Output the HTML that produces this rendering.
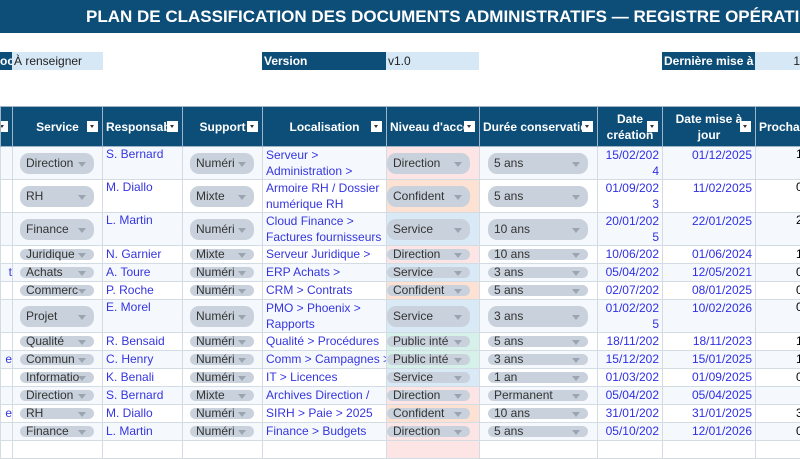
<!DOCTYPE html>
<html><head><meta charset="utf-8"><style>
*{margin:0;padding:0;box-sizing:border-box}
body{width:800px;height:442px;overflow:hidden;background:#fff;font-family:"Liberation Sans",sans-serif;position:relative}
.title{position:absolute;left:0;top:0;width:800px;height:33px;background:#0d4e79;color:#fff;font-weight:bold;font-size:17px;line-height:33px;white-space:nowrap;overflow:hidden}
.title span{position:absolute;left:86px}
.m{position:absolute;top:52px;height:18px;font-size:12px;line-height:18px;white-space:nowrap;overflow:hidden;padding-left:2px}
.d{background:#0d4e79;color:#fff;font-weight:bold}
.l{background:#d6e8f6;color:#222}
table{position:absolute;left:0;top:106px;border-collapse:collapse;table-layout:fixed;width:820px}
td,th{border:1px solid #d3dbe3;overflow:hidden;white-space:nowrap;position:relative;vertical-align:top;font-size:12px;padding:0 3px}
th{background:#0d4e79;color:#fff;font-weight:bold;height:40px;vertical-align:middle;text-align:center;line-height:16px;border-color:#9fb4c6}
th i{position:absolute;right:4px;top:14px;width:11px;height:11px;background:#fff}
th i:after{content:"";position:absolute;left:3px;top:4px;border-left:2.5px solid transparent;border-right:2.5px solid transparent;border-top:3px solid #333}
tr.a td{background:#f5f9fd}
tr.b td{background:#fff}
.bl{color:#3535e0}
.dt{color:#2f2fe6;text-align:right;white-space:normal;word-break:break-all;line-height:16px}
.t td{height:33px}
.s td{height:18px;line-height:16px}
.p{position:absolute;background:#c9d2dc;border-radius:9px;color:#333;font-size:12px;padding-left:6px;overflow:visible;white-space:nowrap}
.t .p{top:6px;height:21px;line-height:21px}
.s .p{top:3px;height:11px;line-height:11px}
.p:after{content:"";position:absolute;right:8px;top:50%;margin-top:-2px;border-left:4px solid transparent;border-right:4px solid transparent;border-top:5px solid #9aa5b1}
.p b{font-weight:normal;display:inline-block;overflow:hidden;vertical-align:top}
.c1 .p{left:7px;right:8px}
.c3 .p{left:7px;right:8px}
.c5 .p{left:0;right:9px}
.c6 .p{left:8px;right:9px}
.nd{background:#fde5e5!important}.nc{background:#fde2d3!important}.ns{background:#d9e9f5!important}.np{background:#d5f1ea!important}
.pr{text-align:left;padding-left:40px}
</style></head><body>
<div class="title"><span>PLAN DE CLASSIFICATION DES DOCUMENTS ADMINISTRATIFS — REGISTRE OPÉRATIONNEL</span></div>
<div class="m d" style="left:0;width:12px;padding-left:0">oc</div>
<div class="m l" style="left:12px;width:91px">À renseigner</div>
<div class="m d" style="left:262px;width:124px">Version</div>
<div class="m l" style="left:386px;width:93px">v1.0</div>
<div class="m d" style="left:662px;width:93px">Dernière mise à j</div>
<div class="m l" style="left:755px;width:45px;text-align:right;padding-right:0">1</div>
<table>
<colgroup><col style="width:12px"><col style="width:90px"><col style="width:80px"><col style="width:80px"><col style="width:124px"><col style="width:93px"><col style="width:118px"><col style="width:65px"><col style="width:93px"><col style="width:65px"></colgroup>
<tr><th><i></i></th><th>Service<i></i></th><th style="text-align:left">Responsab<i></i></th><th>Support<i></i></th><th>Localisation<i></i></th><th style="text-align:left">Niveau d'accè<i></i></th><th style="text-align:left">Durée conservatio<i></i></th><th>Date<br>création<i></i></th><th>Date mise à<br>jour<i></i></th><th style="text-align:left">Prochain</th></tr>
<tr class="t a"><td></td><td class="c1"><div class="p">Direction</div></td><td class="bl">S. Bernard</td><td class="c3"><div class="p">Numéri</div></td><td class="bl" style="white-space:normal;line-height:16px">Serveur &gt; Administration &gt;</td><td class="c5 nd"><div class="p">Direction</div></td><td class="c6"><div class="p">5 ans</div></td><td class="dt">15/02/2024</td><td class="dt">01/12/2025</td><td class="pr">1</td></tr>
<tr class="t b"><td></td><td class="c1"><div class="p">RH</div></td><td class="bl">M. Diallo</td><td class="c3"><div class="p">Mixte</div></td><td class="bl" style="white-space:normal;line-height:16px">Armoire RH / Dossier numérique RH</td><td class="c5 nc"><div class="p">Confident</div></td><td class="c6"><div class="p">5 ans</div></td><td class="dt">01/09/2023</td><td class="dt">11/02/2025</td><td class="pr">0</td></tr>
<tr class="t a"><td></td><td class="c1"><div class="p">Finance</div></td><td class="bl">L. Martin</td><td class="c3"><div class="p">Numéri</div></td><td class="bl" style="white-space:normal;line-height:16px">Cloud Finance &gt; Factures fournisseurs</td><td class="c5 ns"><div class="p">Service</div></td><td class="c6"><div class="p">10 ans</div></td><td class="dt">20/01/2025</td><td class="dt">22/01/2025</td><td class="pr">2</td></tr>
<tr class="s b"><td></td><td class="c1"><div class="p">Juridique</div></td><td class="bl">N. Garnier</td><td class="c3"><div class="p">Mixte</div></td><td class="bl">Serveur Juridique &gt;</td><td class="c5 nd"><div class="p">Direction</div></td><td class="c6"><div class="p">10 ans</div></td><td class="dt">10/06/202</td><td class="dt">01/06/2024</td><td class="pr">1</td></tr>
<tr class="s a"><td class="bl" style="padding:0;text-align:right">t</td><td class="c1"><div class="p">Achats</div></td><td class="bl">A. Toure</td><td class="c3"><div class="p">Numéri</div></td><td class="bl">ERP Achats &gt;</td><td class="c5 ns"><div class="p">Service</div></td><td class="c6"><div class="p">3 ans</div></td><td class="dt">05/04/202</td><td class="dt">12/05/2021</td><td class="pr">0</td></tr>
<tr class="s b"><td></td><td class="c1"><div class="p">Commerc</div></td><td class="bl">P. Roche</td><td class="c3"><div class="p">Numéri</div></td><td class="bl">CRM &gt; Contrats</td><td class="c5 nc"><div class="p">Confident</div></td><td class="c6"><div class="p">5 ans</div></td><td class="dt">02/07/202</td><td class="dt">08/01/2025</td><td class="pr">0</td></tr>
<tr class="t a"><td></td><td class="c1"><div class="p">Projet</div></td><td class="bl">E. Morel</td><td class="c3"><div class="p">Numéri</div></td><td class="bl" style="white-space:normal;line-height:16px">PMO &gt; Phoenix &gt; Rapports</td><td class="c5 ns"><div class="p">Service</div></td><td class="c6"><div class="p">3 ans</div></td><td class="dt">01/02/2025</td><td class="dt">10/02/2026</td><td class="pr">0</td></tr>
<tr class="s b"><td></td><td class="c1"><div class="p">Qualité</div></td><td class="bl">R. Bensaid</td><td class="c3"><div class="p">Numéri</div></td><td class="bl">Qualité &gt; Procédures</td><td class="c5 np"><div class="p"><b style="width:58px">Public inté</b></div></td><td class="c6"><div class="p">5 ans</div></td><td class="dt">18/11/202</td><td class="dt">18/11/2023</td><td class="pr">1</td></tr>
<tr class="s a"><td class="bl" style="padding:0;text-align:right">e</td><td class="c1"><div class="p">Commun</div></td><td class="bl">C. Henry</td><td class="c3"><div class="p">Numéri</div></td><td class="bl">Comm &gt; Campagnes &gt;</td><td class="c5 np"><div class="p"><b style="width:58px">Public inté</b></div></td><td class="c6"><div class="p">3 ans</div></td><td class="dt">15/12/202</td><td class="dt">15/01/2025</td><td class="pr">1</td></tr>
<tr class="s b"><td></td><td class="c1"><div class="p"><b style="width:62px">Informatio</b></div></td><td class="bl">K. Benali</td><td class="c3"><div class="p">Numéri</div></td><td class="bl">IT &gt; Licences</td><td class="c5 ns"><div class="p">Service</div></td><td class="c6"><div class="p">1 an</div></td><td class="dt">01/03/202</td><td class="dt">01/09/2025</td><td class="pr">0</td></tr>
<tr class="s a"><td></td><td class="c1"><div class="p">Direction</div></td><td class="bl">S. Bernard</td><td class="c3"><div class="p">Mixte</div></td><td class="bl">Archives Direction /</td><td class="c5 nd"><div class="p">Direction</div></td><td class="c6"><div class="p">Permanent</div></td><td class="dt">05/04/202</td><td class="dt">05/04/2025</td><td class="pr"></td></tr>
<tr class="s b"><td class="bl" style="padding:0;text-align:right">e</td><td class="c1"><div class="p">RH</div></td><td class="bl">M. Diallo</td><td class="c3"><div class="p">Numéri</div></td><td class="bl">SIRH &gt; Paie &gt; 2025</td><td class="c5 nc"><div class="p">Confident</div></td><td class="c6"><div class="p">10 ans</div></td><td class="dt">31/01/202</td><td class="dt">31/01/2025</td><td class="pr">3</td></tr>
<tr class="s a"><td></td><td class="c1"><div class="p">Finance</div></td><td class="bl">L. Martin</td><td class="c3"><div class="p">Numéri</div></td><td class="bl">Finance &gt; Budgets</td><td class="c5 nd"><div class="p">Direction</div></td><td class="c6"><div class="p">5 ans</div></td><td class="dt">05/10/202</td><td class="dt">12/01/2026</td><td class="pr">0</td></tr>
<tr class="s b"><td></td><td></td><td></td><td></td><td></td><td class="nd"></td><td></td><td></td><td></td><td></td></tr>
</table>
</body></html>
